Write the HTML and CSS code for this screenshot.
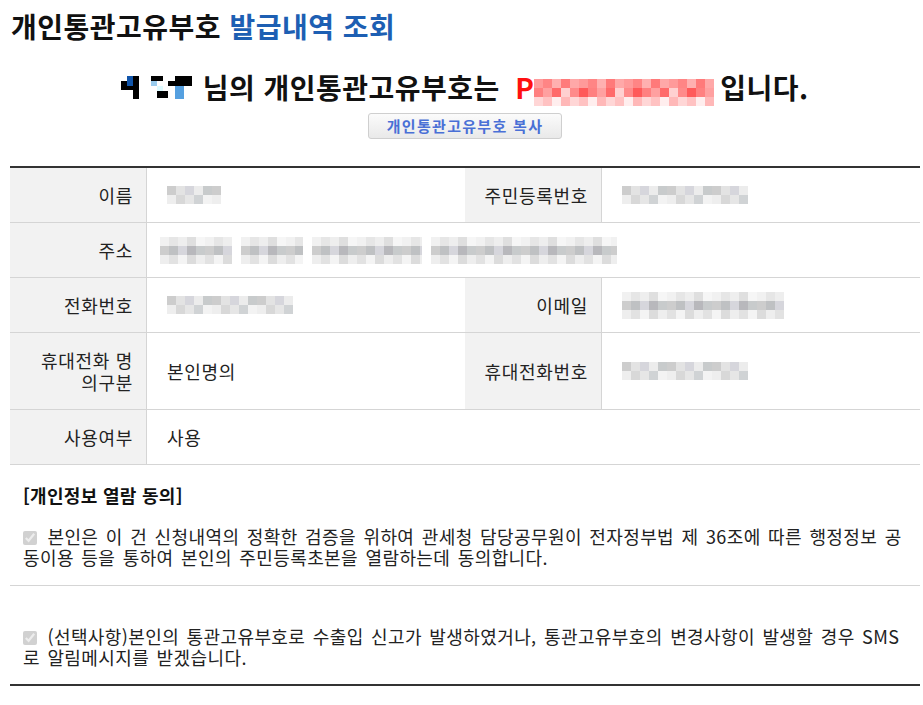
FILE: index.html
```html
<!DOCTYPE html>
<html lang="ko">
<head>
    <meta charset="UTF-8">
    <meta name="viewport" content="width=device-width, initial-scale=1.0">
    <title>개인통관고유부호 발급내역 조회</title>
    <link rel="stylesheet" href="styles.css">
</head>
<body>
    <div class="wrap">
        <h1 class="page-title">개인통관고유부호 <span class="accent">발급내역 조회</span></h1>

        <div class="result">
            <p class="result-msg">
                <!-- masked user name -->
                <svg class="name-mask" width="72" height="24" viewBox="0 0 72 24">
                    <rect x="0" y="5" width="6" height="9" fill="#000"/>
                    <rect x="6" y="0" width="6" height="10" fill="#1155aa"/>
                    <rect x="6" y="10" width="6" height="4" fill="#000"/>
                    <rect x="12" y="0" width="6" height="23" fill="#000"/>
                    <rect x="30" y="0" width="12" height="5" fill="#000"/>
                    <rect x="30" y="5" width="6" height="5" fill="#99ccee"/>
                    <rect x="36" y="10" width="6" height="5" fill="#ddfaff"/>
                    <rect x="36" y="15" width="11" height="7" fill="#000"/>
                    <rect x="47" y="5" width="24" height="5" fill="#000"/>
                    <rect x="54" y="0" width="17" height="5" fill="#000"/>
                    <rect x="54" y="10" width="9" height="13" fill="#55a0e0"/>
                </svg>
                님의 개인통관고유부호는
                <span class="code"><span class="code-p">P</span><span class="code-mask"></span></span>
                입니다.
            </p>
            <button type="button" class="copy-btn">개인통관고유부호 복사</button>
        </div>

        <table class="info-table">
            <colgroup>
                <col class="col-th">
                <col class="col-td">
                <col class="col-th">
                <col class="col-td">
            </colgroup>
            <tbody>
                <tr>
                    <th>이름</th>
                    <td><span class="mask mask-name"></span></td>
                    <th>주민등록번호</th>
                    <td><span class="mask mask-rrn"></span></td>
                </tr>
                <tr>
                    <th>주소</th>
                    <td colspan="3" class="addr">
                        <div class="mask-row">
                            <span class="mask mask-tall mask-addr1"></span>
                            <span class="mask mask-tall mask-addr2"></span>
                            <span class="mask mask-tall mask-addr3"></span>
                            <span class="mask mask-tall mask-addr4"></span>
                        </div>
                    </td>
                </tr>
                <tr>
                    <th>전화번호</th>
                    <td><span class="mask mask-tel"></span></td>
                    <th>이메일</th>
                    <td><span class="mask mask-tall mask-mail"></span></td>
                </tr>
                <tr>
                    <th>휴대전화 명의구분</th>
                    <td>본인명의</td>
                    <th>휴대전화번호</th>
                    <td><span class="mask mask-tel"></span></td>
                </tr>
                <tr>
                    <th>사용여부</th>
                    <td colspan="3">사용</td>
                </tr>
            </tbody>
        </table>

        <div class="agree">
            <h3 class="agree-title">[개인정보 열람 동의]</h3>
            <p class="agree-item">
                <input type="checkbox" checked disabled>
                본인은 이 건 신청내역의 정확한 검증을 위하여 관세청 담당공무원이 전자정부법 제 36조에 따른 행정정보 공동이용 등을 통하여 본인의 주민등록초본을 열람하는데 동의합니다.
            </p>
        </div>

        <div class="agree agree-sms">
            <p class="agree-item">
                <input type="checkbox" checked disabled>
                (선택사항)본인의 통관고유부호로 수출입 신고가 발생하였거나, 통관고유부호의 변경사항이 발생할 경우 SMS로 알림메시지를 받겠습니다.
            </p>
        </div>
    </div>
</body>
</html>
```

FILE: styles.css
```css
body {
    margin: 0;
    padding: 0;
    background-color: #fff;
    color: #222;
    font-family: 'Noto Sans CJK KR', 'Noto Sans', sans-serif;
}
.wrap {
    width: 910px;
    padding: 0 10px;
}
.page-title {
    margin: 0;
    padding: 8px 0 0 1px;
    font-size: 28px;
    letter-spacing: 0.5px;
    line-height: 36px;
    color: #111;
}
.page-title .accent {
    color: #1d5fb3;
}
.result {
    text-align: center;
    padding-top: 23px;
}
.result-msg {
    margin: 0;
    font-size: 28px;
    font-weight: bold;
    letter-spacing: 0.5px;
    line-height: 40px;
    color: #111;
}
.name-mask {
    margin-right: 1px;
    vertical-align: -1px;
}
.code {
    margin-left: 7px;
    margin-right: -2px;
}
.code-p {
    color: #ff1010;
    letter-spacing: 0;
}
.code-mask {
    display: inline-block;
    width: 180px;
    height: 27px;
    vertical-align: -7px;
    background:
        repeating-linear-gradient(90deg, #ff9a9a 0 9px, #ff8585 9px 18px, #ffb0b0 18px 27px, #ff7a7a 27px 36px, #ffa8a8 36px 45px) 0 0 / 100% 9px no-repeat,
        repeating-linear-gradient(90deg, #ff8080 0 9px, #ffa0a0 9px 18px, #ff6a6a 18px 27px, #ffd0d0 27px 36px, #ff8a8a 36px 45px, #ff5a5a 45px 54px) 0 9px / 100% 9px no-repeat,
        repeating-linear-gradient(90deg, #ffd6d6 0 9px, #ffc2c2 9px 18px, #ffeeee 18px 27px, #ffb8b8 27px 36px) 0 18px / 100% 9px no-repeat;
}
.copy-btn {
    margin-top: 6px;
    width: 194px;
    height: 26px;
    padding: 0;
    border: 1px solid #cfcfcf;
    border-radius: 3px;
    background: linear-gradient(#fbfbfb, #e9e9e9);
    color: #4a70d6;
    font-family: inherit;
    font-size: 15px;
    font-weight: bold;
    letter-spacing: 1.3px;
    line-height: 24px;
    cursor: pointer;
}
.info-table {
    width: 100%;
    margin-top: 27px;
    border-collapse: collapse;
    border-top: 2px solid #333;
    table-layout: fixed;
}
.col-th {
    width: 15%;
}
.col-td {
    width: 35%;
}
.info-table th,
.info-table td {
    border-bottom: 1px solid #d5d5d5;
    padding: 16px 13px 16px 20px;
    font-size: 18px;
    letter-spacing: 0.7px;
    line-height: 22px;
    text-align: left;
    vertical-align: middle;
}
.info-table th {
    padding-left: 18px;
    background-color: #f2f2f2;
    border-right: 1px solid #d5d5d5;
    font-weight: normal;
    text-align: right;
}
.info-table td.addr {
    padding-left: 13px;
}
.mask-row {
    display: flex;
    align-items: center;
    gap: 9px;
}
.mask {
    display: block;
    height: 18px;
    background:
        repeating-linear-gradient(90deg, #cdcdcd 0 9px, #e3e3e3 9px 18px, #d6d6dc 18px 27px, #ececec 27px 36px, #c8cbcc 36px 45px) 0 0 / 100% 9px no-repeat,
        repeating-linear-gradient(90deg, #eeeeee 0 9px, #d8d8d8 9px 18px, #e6e6e6 18px 27px, #d0d3d5 27px 36px, #f3f3f3 36px 45px) 0 9px / 100% 9px no-repeat;
}
.mask-tall {
    height: 27px;
    margin: -3px 0;
    background:
        repeating-linear-gradient(90deg, #f1f1f1 0 9px, #e6e6e6 9px 18px, #eeeeee 18px 27px, #dfdfdf 27px 36px, #f6f6f6 36px 45px) 0 0 / 100% 9px no-repeat,
        repeating-linear-gradient(90deg, #cdcdcd 0 9px, #bfc1c3 9px 18px, #d6d6dc 18px 27px, #b8b8bc 27px 36px, #c8cbcc 36px 45px) 0 9px / 100% 9px no-repeat,
        repeating-linear-gradient(90deg, #eeeeee 0 9px, #e2e2e2 9px 18px, #f4f4f4 18px 27px, #dcdcdc 27px 36px) 0 18px / 100% 9px no-repeat;
}
.mask-name { width: 54px; }
.mask-rrn { width: 126px; }
.mask-tel { width: 126px; }
.mask-mail { width: 162px; }
.mask-addr1 { width: 72px; }
.mask-addr2 { width: 62px; }
.mask-addr3 { width: 110px; }
.mask-addr4 { width: 186px; }
.agree {
    padding: 18px 12px 17px 13px;
    border-bottom: 1px solid #d5d5d5;
}
.agree-title {
    margin: 0 0 19px;
    font-size: 18px;
    letter-spacing: 0.3px;
    line-height: 24px;
    color: #111;
}
.agree-item {
    margin: 0;
    font-size: 18px;
    letter-spacing: 0.4px;
    word-spacing: 2px;
    line-height: 21px;
    color: #222;
}
.agree-item input {
    width: 14px;
    height: 14px;
    margin: 0 3px 0 0;
    vertical-align: -1px;
}
.agree-sms {
    padding-top: 40px;
    padding-bottom: 16px;
    border-bottom: 2px solid #333;
}
```
